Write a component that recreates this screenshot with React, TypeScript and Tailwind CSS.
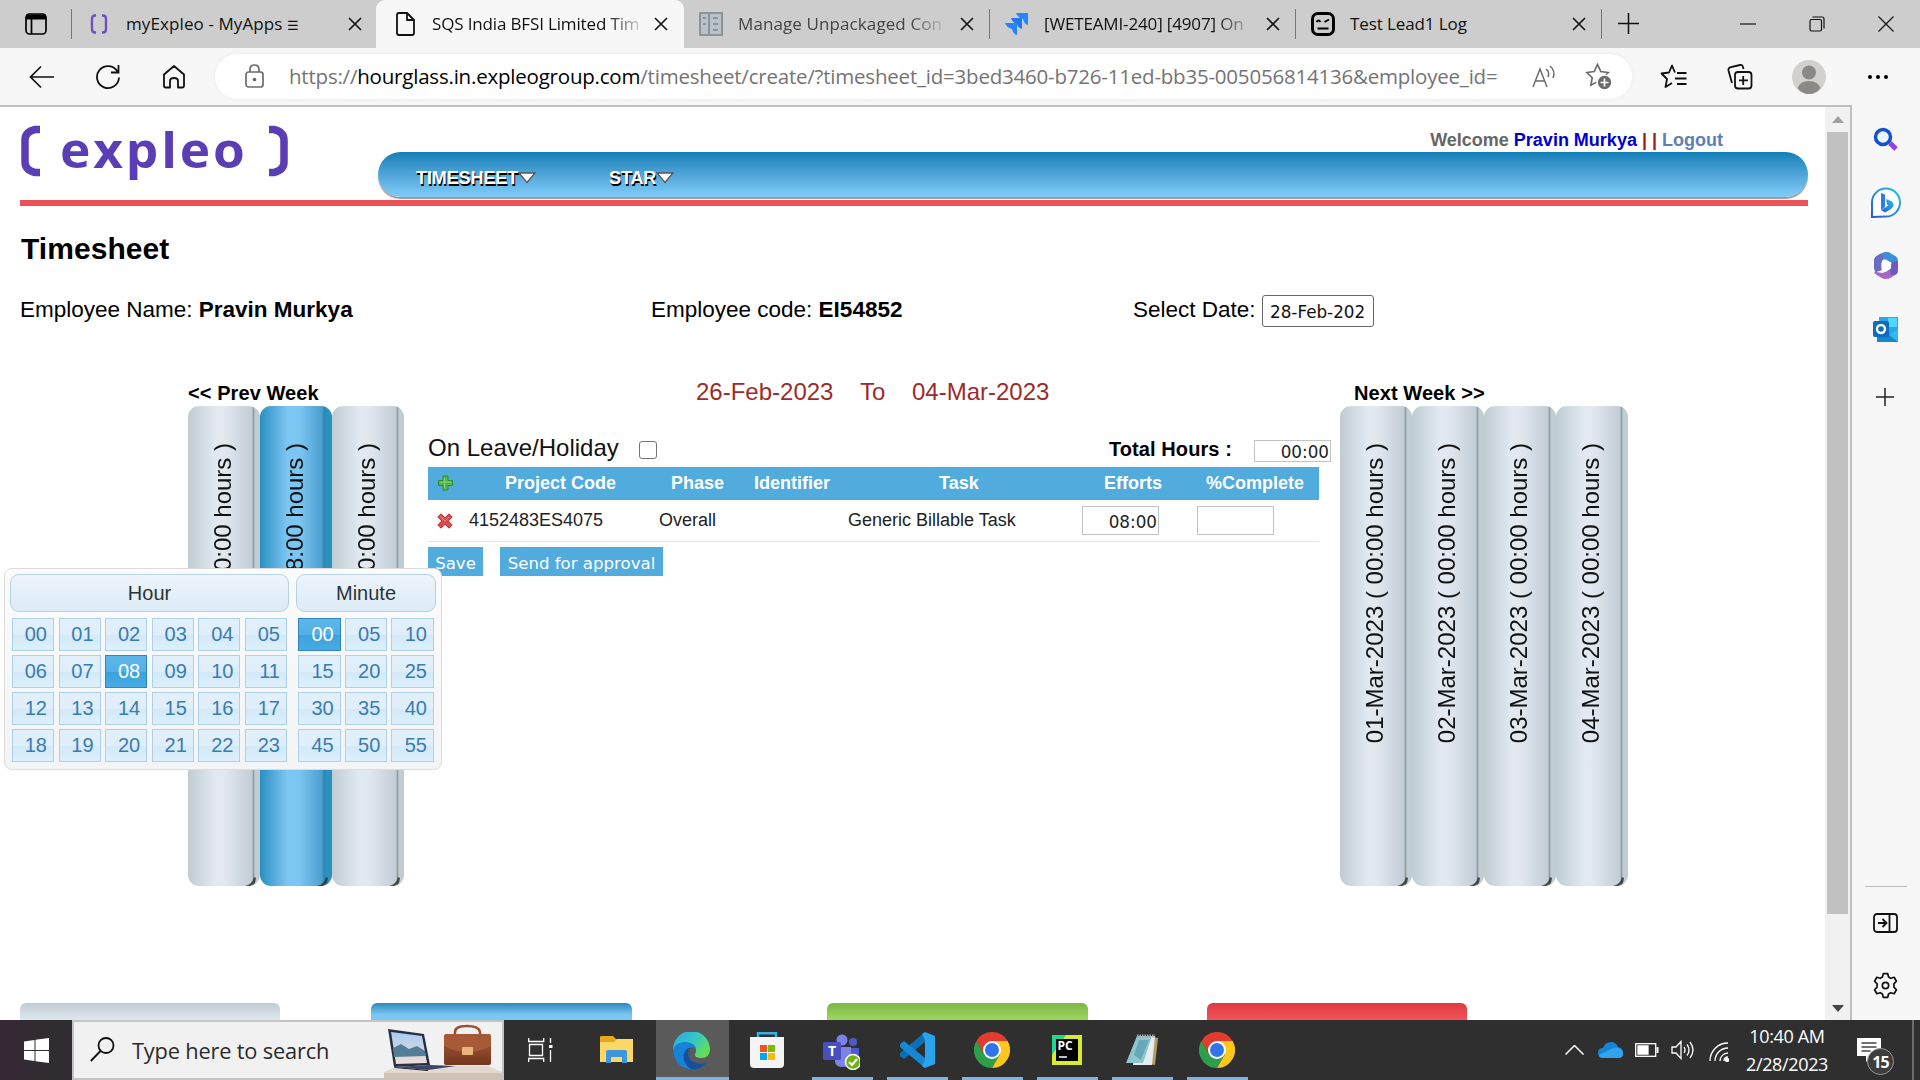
import React from "react";

const seg = "font-['Open_Sans',sans-serif]";

function Close({ className = "" }: { className?: string }) {
  return (
    <svg className={`h-[14px] w-[14px] shrink-0 ${className}`} viewBox="0 0 14 14" stroke="#111" strokeWidth="1.6" fill="none">
      <path d="M1 1l12 12M13 1L1 13" />
    </svg>
  );
}

function TabBar() {
  return (
    <div className={`flex h-12 shrink-0 items-center bg-[#cdcdcd] text-[17px] text-[#111] ${seg}`}>
      <div className="flex w-[71px] justify-center">
        <svg width="22" height="22" viewBox="0 0 22 22" fill="none" stroke="#000" strokeWidth="1.7">
          <rect x="1" y="1" width="20" height="20" rx="3.5" />
          <path d="M1 4h20" strokeWidth="5" />
          <path d="M6.500 6v15" />
        </svg>
      </div>
      <div className="h-[30px] w-px bg-[#777]" />
      <div className="flex h-full w-[304px] items-center pl-[18px]">
        <svg width="18" height="20" viewBox="0 0 18 20" fill="none" stroke="#6d4fc0" strokeWidth="2.400">
          <path d="M6 1.500H5Q2 1.500 2 5v10q0 3.500 3 3.500h1M12 1.500h1q3 0 3 3.500v10q0 3.500-3 3.500h-1" />
        </svg>
        <div className="ml-[18px] w-[222px] whitespace-nowrap tracking-[0.1px]">
          myExpleo - MyApps <span className="text-[13px]">☰</span>
        </div>
        <Close />
      </div>
      <div className="flex h-full w-[308px] items-center rounded-t-[9px] bg-[#f7f7f7] pl-[20px]">
        <svg width="19" height="24" viewBox="0 0 19 24" fill="none" stroke="#111" strokeWidth="1.800" strokeLinejoin="round">
          <path d="M3 1h8l7 7v13q0 2-2 2H3q-2 0-2-2V3q0-2 2-2zM11 1v7h7" />
        </svg>
        <div className="ml-[17px] w-[214px] whitespace-nowrap tracking-[-0.15px] mask-r-from-82%">SQS India BFSI Limited Tim</div>
        <Close className="ml-[8px]" />
      </div>
      <div className="flex h-full w-[305px] items-center pl-[15px]">
        <svg width="24" height="24" viewBox="0 0 24 24" fill="#b9c2c8" stroke="#8b9499" strokeWidth="2">
          <rect x="1" y="1" width="22" height="22" />
          <path d="M10 1v22M4 6h3M4 12h3M14 6h5M14 12h5M14 18h5" />
        </svg>
        <div className="ml-[15px] w-[210px] whitespace-nowrap tracking-[0.1px] text-[#444] mask-r-from-82%">Manage Unpackaged Con</div>
        <Close className="ml-[12px]" />
      </div>
      <div className="h-[30px] w-px bg-[#777]" />
      <div className="flex h-full w-[305px] items-center pl-[15px]">
        <svg width="24" height="24" viewBox="0 0 24 24">
          <path d="M11 1h12v12q-4-1-5-6-5-1-7-6z" fill="#2684ff" />
          <path d="M6 6h11v11q-4-1-5-5-4-1-6-6z" fill="#1f78f0" />
          <path d="M0 11h12v12q-4-1-5-6-5-1-7-6z" fill="#2684ff" />
        </svg>
        <div className="ml-[15px] w-[210px] whitespace-nowrap tracking-[-0.15px] mask-r-from-82%">[WETEAMI-240] [4907] On</div>
        <Close className="ml-[12px]" />
      </div>
      <div className="h-[30px] w-px bg-[#777]" />
      <div className="flex h-full w-[305px] items-center pl-[15px]">
        <svg width="24" height="24" viewBox="0 0 24 24" fill="none" stroke="#000" strokeWidth="2">
          <rect x="1.500" y="1.500" width="21" height="21" rx="5.500" strokeWidth="3" />
          <path d="M5.500 10q2-3 4 0M13.500 10l4.500-2.500M6.500 16.500h11" />
        </svg>
        <div className="ml-[15px] w-[222px] whitespace-nowrap tracking-[-0.1px]">Test Lead1 Log</div>
        <Close />
      </div>
      <div className="h-[30px] w-px bg-[#777]" />
      <svg className="mb-0.5 ml-[16px]" width="21" height="21" viewBox="0 0 21 21" stroke="#111" strokeWidth="1.500"><path d="M10.500 0v21M0 10.500h21" /></svg>
      <svg className="ml-[101px]" width="16" height="16" viewBox="0 0 16 16" stroke="#111" strokeWidth="1.200"><path d="M0 8h16" /></svg>
      <svg className="ml-[53px]" width="16" height="16" viewBox="0 0 16 16" fill="none" stroke="#111" strokeWidth="1.200">
        <rect x="1" y="3.500" width="11.500" height="11.500" rx="1.500" /><path d="M3.500 1H13q2 0 2 2v9.500" />
      </svg>
      <svg className="ml-[53px]" width="16" height="16" viewBox="0 0 16 16" stroke="#111" strokeWidth="1.200"><path d="M.5.500l15 15M15.500.500l-15 15" /></svg>
    </div>
  );
}

const starPath = "M12.500 1.500l3.300 7 7.400 1-5.400 5.200 1.300 7.500-6.600-3.600-6.600 3.600 1.300-7.500L1.800 9.500l7.400-1z";

function Toolbar() {
  return (
    <div className="flex h-[57px] shrink-0 items-center bg-[#f7f7f7] pl-[29px]">
      <svg width="26" height="24" viewBox="0 0 26 24" fill="none" stroke="#111" strokeWidth="1.700"><path d="M25 12H2M12 1.500L1.500 12 12 22.500" /></svg>
      <svg className="ml-[40px]" width="26" height="26" viewBox="0 0 26 26" fill="none" stroke="#111" strokeWidth="1.800"><path d="M22.500 7.500A11 11 0 1 0 24 13.500M23.500 1v7.500H16" /></svg>
      <svg className="ml-[41px]" width="24" height="26" viewBox="0 0 24 26" fill="none" stroke="#111" strokeWidth="1.800" strokeLinejoin="round"><path d="M2 10.500L12 2l10 8.500V22q0 1.500-1.500 1.500H16V17q0-3-4-3t-4 3v6.500H3.500Q2 23.500 2 22z" /></svg>
      <div className="ml-[29px] flex h-[45px] w-[1417px] items-center rounded-full bg-white pl-[30px] shadow-[0_0_5px_#e9e9e9]">
        <svg className="mb-0.5" width="19" height="24" viewBox="0 0 19 24" fill="none" stroke="#6b6b6b" strokeWidth="1.700">
          <rect x="1" y="8" width="17" height="15" rx="2.500" /><path d="M5 8V5.500Q5 1 9.500 1T14 5.500V8" /><circle cx="9.500" cy="15.500" r="1" fill="#6b6b6b" />
        </svg>
        <div className={`ml-[25px] w-[1219px] whitespace-nowrap text-[20.500px] tracking-[-0.210px] text-[#747474] ${seg}`}>
          https://<span className="text-black">hourglass.in.expleogroup.com</span>/timesheet/create/?timesheet_id=3bed3460-b726-11ed-bb35-005056814136&amp;employee_id=
        </div>
        <svg className="ml-[24px]" width="25" height="24" viewBox="0 0 25 24" fill="none" stroke="#6b6b6b" strokeWidth="1.500"><path d="M1 22L8 4l7 18M3.500 16h9M14 4q4 3 2 8M18 1q6 5 3 12" /></svg>
        <svg className="ml-[28px]" width="27" height="27" viewBox="0 0 27 27" fill="none" stroke="#6b6b6b" strokeWidth="1.700">
          <path d={starPath} /><circle cx="19.500" cy="19.500" r="7.500" fill="#6b6b6b" stroke="#fff" /><path d="M15.500 19.500h8M19.500 15.500v8" stroke="#fff" />
        </svg>
      </div>
      <svg className="ml-[28px]" width="27" height="25" viewBox="0 0 27 25" fill="none" stroke="#111" strokeWidth="1.800" strokeLinejoin="round"><path d="M15 8.500L12 1.500 9 8.500l-7.500 1L7 15l-1.500 8 6.500-4M17 9h9.500M15 14.500h11.500M17 20h9.500" /></svg>
      <svg className="ml-[40px]" width="26" height="26" viewBox="0 0 26 26" fill="none" stroke="#111" strokeWidth="1.800"><rect x="8" y="8" width="16.500" height="16.500" rx="3" /><path d="M16.200 12v9M12 16.300h9M5 19L1.500 6.500Q1 4 3 3.300L13 1q2.500-.5 3 2l.5 2" /></svg>
      <svg className="ml-[39px]" width="34" height="34" viewBox="0 0 34 34"><circle cx="17" cy="17" r="17" fill="#d3d1cc" /><circle cx="17" cy="12.500" r="7" fill="#8b8985" /><path d="M5.500 28q3-7 11.500-7t11.500 7Q24 34 17 34T5.500 28z" fill="#8b8985" /></svg>
      <svg className="ml-[41px]" width="22" height="6" viewBox="0 0 22 6"><circle cx="3" cy="3" r="2" /><circle cx="11" cy="3" r="2" /><circle cx="19" cy="3" r="2" /></svg>
    </div>
  );
}

function Caret() {
  return (
    <svg width="18" height="12" viewBox="0 0 18 12"><path d="M1 1h16L9 10.500z" fill="#fff" stroke="#555" strokeWidth="1.300" /></svg>
  );
}

function SiteHeader() {
  return (
    <div className="flex h-[99px] shrink-0 flex-col">
      <div className="flex h-[93px]">
        <div className="flex h-[93px] w-[378px] items-start pl-[20px] pt-[18px]">
          <svg width="20" height="52" viewBox="0 0 20 52" fill="none" stroke="#5b3eb6" strokeWidth="7.500"><path d="M20 4.500h-5Q5 7 5 15v22q0 8 10 10.500h5" /></svg>
          <div className="ml-[20px] w-[209px] origin-left scale-x-[1.07] whitespace-nowrap font-['Open_Sans',sans-serif] text-[48px] leading-[50px] font-bold tracking-[2.700px] text-[#5b3eb6]">expleo</div>
          <svg width="20" height="52" viewBox="0 0 20 52" fill="none" stroke="#5b3eb6" strokeWidth="7.500"><path d="M0 4.500h5Q15 7 15 15v22q0 8-10 10.500H0" /></svg>
        </div>
        <div className="flex w-[1430px] flex-col pt-[22px]">
          <div className="h-[23px] whitespace-nowrap pr-[85px] text-right text-[18px] leading-[22px] font-bold text-[#666]">
            Welcome <span className="text-[#0000cd]">Pravin Murkya</span> <span className="text-[#9b1c1c]">| |</span> <span className="text-[#5f7fb2]">Logout</span>
          </div>
          <div className="flex h-[45px] items-center rounded-full bg-linear-to-b from-[#0d7fb8] to-[#80ccf8] pt-[7px] pl-[38px] text-[18px] font-bold tracking-[-0.100px] text-white shadow-[0_2px_1px_#999] [text-shadow:1px_2px_0_#000]">
            <div className="flex w-[193px] items-center"><span>TIMESHEET</span><Caret /></div>
            <div className="flex items-center"><span>STAR</span><Caret /></div>
          </div>
        </div>
      </div>
      <div className="ml-[20px] h-[6px] w-[1788px] bg-[#ee5259]" />
    </div>
  );
}

function Bar({ text, active = false }: { text: string; active?: boolean }) {
  const tone = active
    ? "bg-[linear-gradient(90deg,#2a8fc0_0%,#7cc6f3_38%,#7cc6f3_54%,#4d9fd0_86%,#2f85ab_89%,#2a94c4_93%,#2a8fc0_100%)]"
    : "bg-[linear-gradient(90deg,#bfccd2_0%,#e1e9f1_38%,#e1e8f0_50%,#c5cfd9_86%,#c2ccd3_89%,#8b999f_91%,#c0cdd3_93%,#bfccd2_100%)]";
  return (
    <div className={`relative flex h-[480px] w-[72px] items-start justify-end overflow-hidden rounded-[11px] ${tone}`}>
      <div className="mt-[37px] mr-[23px] rotate-180 text-[24px] leading-[28px] whitespace-nowrap text-[#111] [writing-mode:vertical-rl]">{text}</div>
      <svg className="absolute right-[3px] bottom-0" width="12" height="9" viewBox="0 0 12 9"><path d="M0 9Q7 8 9 0l2 1-1 5-4 3z" fill="#333" opacity=".85" /></svg>
    </div>
  );
}

function TimeInput({ value, tall = false }: { value: string; tall?: boolean }) {
  return (
    <div className={`flex w-[77px] items-center justify-end border border-[#c3c3c3] bg-white pt-[3px] pr-px font-['DejaVu_Sans',sans-serif] text-[16.800px] leading-none text-[#222] ${tall ? "h-[29px]" : "h-[22px]"}`}>{value}</div>
  );
}

function Entries() {
  return (
    <div className="ml-[24px] w-[912px]">
      <div className="flex h-[32px] items-center text-[24px] text-[#9d2b2b]">
        <span className="ml-[268px] w-[164px]">26-Feb-2023</span><span className="w-[52px]">To</span><span>04-Mar-2023</span>
      </div>
      <div className="mt-[23px] flex h-[36px] items-center">
        <span className="mb-[2px] w-[211px] text-[24px] text-[#111]">On Leave/Holiday</span>
        <div className="mt-[2px] h-[18px] w-[18px] rounded-[3px] border-[1.500px] border-[#767676] bg-white" />
        <span className="ml-[452px] w-[145px] text-[20px] font-bold tracking-[0.080px] text-black">Total Hours :</span>
        <div className="mt-[4px]"><TimeInput value="00:00" /></div>
      </div>
      <div className="flex h-[33px] w-[891px] items-center bg-[#51abdd] pb-px text-[18px] font-bold text-white">
        <svg className="ml-[10px]" width="15" height="16" viewBox="0 0 15 16"><path d="M5 1h5v4.500h4.500v5H10V15H5v-4.500H.5v-5H5z" fill="#4fb74b" stroke="#2e8b34" /><path d="M6.500 2.500v11M2 7h11" stroke="#83d57c" /></svg>
        <span className="ml-[52px] w-[166px]">Project Code</span><span className="w-[83px]">Phase</span><span className="w-[185px]">Identifier</span>
        <span className="w-[165px]">Task</span><span className="w-[102px]">Efforts</span><span>%Complete</span>
      </div>
      <div className="flex h-[42px] w-[891px] items-center border-b border-[#e6e6e6] text-[18px] text-[#222]">
        <svg className="ml-[9px]" width="16" height="16" viewBox="0 0 16 16"><path d="M4 .8l4 4 4-4L15.200 4l-4 4 4 4-3.200 3.200-4-4-4 4L.8 12l4-4-4-4z" fill="#dd4a4c" stroke="#b5292e" /><path d="M3.500 3.500L8 8l4-4" stroke="#f28b8b" fill="none" /></svg>
        <span className="ml-[16px] w-[190px]">4152483ES4075</span><span className="w-[189px]">Overall</span><span className="w-[234px]">Generic Billable Task</span>
        <TimeInput value="08:00" tall />
        <div className="ml-[38px]"><TimeInput value="" tall /></div>
      </div>
      <div className="mt-[5px] flex gap-[17px] font-['DejaVu_Sans',sans-serif] text-[16.600px] text-white">
        <div className="flex h-[29px] w-[55px] items-center justify-center bg-[#51abdd] pt-[5px]">Save</div>
        <div className="flex h-[29px] w-[163px] items-center justify-center bg-[#51abdd] pt-[5px]">Send for approval</div>
      </div>
    </div>
  );
}

function PickerCell({ label, on }: { label: string; on: boolean }) {
  const look = on
    ? "border-[#2e86c4] bg-[linear-gradient(#5cb6e8_0%,#54b0e6_50%,#3da2dc_52%,#48abe2_100%)] text-white"
    : "border-[#aed0ea] bg-[linear-gradient(#e2f0fa_0%,#deeefb_50%,#d3e9f8_52%,#dcf0fc_100%)] text-[#3a7cb0]";
  return <div className={`flex h-[33px] items-center justify-end border pr-[6px] pb-[2px] text-[20px] leading-none ${look}`}>{label}</div>;
}

function TimePicker() {
  const hours = Array.from({ length: 24 }, (_, i) => String(i).padStart(2, "0"));
  const minutes = Array.from({ length: 12 }, (_, i) => String(i * 5).padStart(2, "0"));
  const head = "flex h-[38px] items-center justify-center rounded-[9px] border border-[#b3d2ea] bg-linear-to-b from-[#edf4fb] to-[#dcebf7] text-[20px] text-[#2b3338]";
  return (
    <div className="absolute top-[461px] left-[4px] flex h-[202px] w-[438px] gap-[7px] rounded-[8px] border border-[#dcdcdc] bg-linear-to-b from-[#fbfbfb] to-[#f2f4f5] pt-[5px] pl-[5px]">
      <div className="w-[279px]">
        <div className={head}>Hour</div>
        <div className="mt-[6px] grid w-[277px] grid-cols-6 gap-x-[4.600px] gap-y-1 pl-[2px]">
          {hours.map((h) => <PickerCell key={h} label={h} on={h === "08"} />)}
        </div>
      </div>
      <div className="w-[140px]">
        <div className={head}>Minute</div>
        <div className="mt-[6px] grid w-[138px] grid-cols-3 gap-x-[4px] gap-y-1 pl-[2px]">
          {minutes.map((m) => <PickerCell key={m} label={m} on={m === "00"} />)}
        </div>
      </div>
    </div>
  );
}

function Page() {
  return (
    <div className="relative flex h-[913px] w-[1825px] flex-col overflow-hidden bg-white">
      <SiteHeader />
      <div className="flex h-[88px] shrink-0 items-center pb-[3px] pl-[21px] text-[30px] font-bold tracking-[0.050px] text-black">Timesheet</div>
      <div className="flex h-[34px] shrink-0 items-center pl-[20px] text-[22.500px] whitespace-nowrap text-black">
        <div className="w-[631px] pb-[3px]">Employee Name: <b>Pravin Murkya</b></div>
        <div className="w-[482px] pb-[3px]">Employee code: <b>EI54852</b></div>
        <div className="w-[129px] pb-[3px]">Select Date:</div>
        <div className="flex h-[32px] w-[112px] items-center overflow-hidden rounded-[3px] border border-[#666] pt-[3px] pl-[7px] font-['DejaVu_Sans',sans-serif] text-[16.800px] text-[#111]">28-Feb-202</div>
      </div>
      <div className="mt-[48px] flex shrink-0 pl-[188px]">
        <div>
          <div className="h-[30px] text-[20px] leading-[34px] font-bold tracking-[0.080px] text-black">&lt;&lt; Prev Week</div>
          <div className="flex">
            <Bar text="26-Feb-2023 ( 00:00 hours )" />
            <Bar text="27-Feb-2023 ( 08:00 hours )" active />
            <Bar text="28-Feb-2023 ( 00:00 hours )" />
          </div>
        </div>
        <Entries />
        <div>
          <div className="h-[30px] pl-[14px] text-[20px] leading-[34px] font-bold tracking-[0.080px] text-black">Next Week &gt;&gt;</div>
          <div className="flex">
            {["01", "02", "03", "04"].map((d) => <Bar key={d} text={`${d}-Mar-2023 ( 00:00 hours )`} />)}
          </div>
        </div>
      </div>
      <div className="mt-auto flex h-[17px] shrink-0 pl-[20px]">
        <div className="w-[260px] rounded-t-[6px] bg-linear-to-b from-[#bfccd2] to-[#dee8ef]" />
        <div className="ml-[91px] w-[261px] rounded-t-[6px] bg-linear-to-b from-[#258bbd] to-[#7cc6f3] to-70%" />
        <div className="ml-[195px] w-[261px] rounded-t-[6px] bg-linear-to-b from-[#7eb544] to-[#9fd764]" />
        <div className="ml-[119px] w-[260px] rounded-t-[6px] bg-linear-to-b from-[#de3940] to-[#f2545b]" />
      </div>
      <TimePicker />
    </div>
  );
}

function Sidebar() {
  return (
    <div className="flex w-[68px] flex-col items-center bg-[#f7f7f7] pt-[22px] pr-px">
      <svg width="26" height="26" viewBox="0 0 26 26" fill="none"><path d="M17 16l6 6" stroke="#9440e8" strokeWidth="5" /><circle cx="10" cy="10" r="7.500" stroke="#1653c8" strokeWidth="3.500" fill="#e8f6ff" /></svg>
      <svg className="mt-[34px]" width="32" height="32" viewBox="0 0 32 32" fill="none">
        <defs><linearGradient id="bing" x1="1" y1="0" x2="0" y2="1"><stop stopColor="#23c5dc" /><stop offset="1" stopColor="#2858d8" /></linearGradient></defs>
        <path d="M2 30V16A14 14 0 1 1 16 29.500z" stroke="url(#bing)" strokeWidth="2" fill="#fff" />
        <path d="M11 6l4 1.500V20l-4 3z" fill="#2f7be6" /><path d="M16 12l6 2.500q2 1.500 1.500 4.500Q22 22 15 25.500L11 23l7.500-4.500-1.500-1z" fill="url(#bing)" />
      </svg>
      <svg className="mt-[33px]" width="26" height="27" viewBox="0 0 26 27">
        <path d="M8 1.500q5-3 10 0L11 6 8.500 9.500V18L3 20Q1 18 1 14V9q0-3 2-4.500z" fill="#5a7fd6" />
        <path d="M1 9q0-3 2-4.500l5-3 3 4.500-2.500 3.500V18L3 20Q1 18 1 14z" fill="#6b6bc4" />
        <path d="M10 1q4-2 8 .5l5 3q2 1.500 2 4.500v6l-6-4-6-3.500H8.500L12 4z" fill="#3d8fd9" />
        <path d="M25 14v4q0 3-2 4.500L18 25.500q-5 3-10 0l-5-3q-1.500-1-2-3l8 1.500q6-1 9-6l1-6 6 3z" fill="#a268c8" />
        <path d="M19 10l6-1v9q0 3-2 4.500l-5 .5q-2-6 1-13z" fill="#5553b9" opacity=".65" />
        <path d="M13 8.500l5 2.500v5.500l-5 2.700-4.500-2.700V11z" fill="#fff" />
      </svg>
      <svg className="mt-[38px]" width="25" height="25" viewBox="0 0 25 25"><path d="M6 0h19v22H6z" fill="#28a8ea" /><path d="M15 1h9v9h-9z" fill="#50d9ff" /><path d="M4 13l10 6 11-6v12H4z" fill="#1686ca" /><path d="M25 12v13l-9-7z" fill="#35b8f1" /><rect y="4" width="16" height="16" rx="2" fill="#0f6cbd" /><circle cx="8" cy="12" r="4" fill="none" stroke="#fff" strokeWidth="2.400" /></svg>
      <svg className="mt-[46px] mr-[2px]" width="18" height="18" viewBox="0 0 18 18" stroke="#222" strokeWidth="1.500"><path d="M9 0v18M0 9h18" /></svg>
      <div className="mt-[480px] h-px w-[42px] bg-[#bdbdbd]" />
      <svg className="mt-[26px]" width="25" height="20" viewBox="0 0 25 20" fill="none" stroke="#111" strokeWidth="1.800"><rect x="1" y="1" width="23" height="18" rx="3" /><path d="M16.500 1v18M5 10h8M9.500 6l4 4-4 4" /></svg>
      <svg className="mt-[39px]" width="27" height="27" viewBox="0 0 24 24" fill="none" stroke="#111" strokeWidth="1.500" strokeLinejoin="round"><path d="M10 1.500h4l.7 3 2 1.100 3-.9 2 3.500L19.500 10.500v3l2.200 2.300-2 3.500-3-.9-2 1.100-.7 3h-4l-.7-3-2-1.100-3 .9-2-3.500 2.200-2.300v-3L2.300 8.200l2-3.500 3 .9 2-1.100z" /><circle cx="12" cy="12" r="2.800" /></svg>
    </div>
  );
}

function Chrome() {
  return (
    <svg width="36" height="36" viewBox="0 0 48 48">
      <path d="M3.200 12A24 24 0 0 1 44.800 12H24L13.600 30z" fill="#e33b2e" />
      <path d="M3.200 12A24 24 0 0 0 24 48l10.400-18H13.600z" fill="#2c9f48" />
      <path d="M44.800 12A24 24 0 0 1 24 48l10.400-18L24 12z" fill="#fdc71b" />
      <circle cx="24" cy="24" r="12" fill="#fff" /><circle cx="24" cy="24" r="9.300" fill="#2f74e8" />
    </svg>
  );
}

function Slot({ children, on = false, line = true }: { children: React.ReactNode; on?: boolean; line?: boolean }) {
  return (
    <div className={`relative flex h-full w-[75px] justify-center pr-[4px] ${on ? "bg-linear-to-r from-[#5a5a5a] from-[73px] to-transparent to-[73px]" : ""}`}>
      <div className="flex h-full items-center">{children}</div>
      {line && <div className={`absolute bottom-0 h-[3px] bg-[#7db3de] ${on ? "left-0 w-[73px]" : "left-[6px] w-[61px]"}`} />}
    </div>
  );
}

function Taskbar() {
  return (
    <div className={`flex h-[60px] shrink-0 items-center bg-[#2f2f2f] ${seg}`}>
      <div className="flex h-full w-[72px] items-center justify-center bg-linear-to-r from-[#352936] to-[#2f2d2f]">
        <svg width="25" height="25" viewBox="0 0 25 25" fill="#fff"><path d="M0 3.500L10.500 2v10H0zM11.500 1.800L25 0v12H11.500zM0 13h10.500v10L0 21.500zM11.500 13H25v12l-13.500-1.800z" /></svg>
      </div>
      <div className="flex h-full w-[432px] items-center border-2 border-[#c4c4c4] bg-[#f1f1f1] pl-[16px]">
        <svg className="mb-0.5" width="25" height="25" viewBox="0 0 25 25" fill="none" stroke="#111" strokeWidth="1.800"><circle cx="16" cy="8.500" r="7.500" /><path d="M10.500 14L.8 24" /></svg>
        <div className="mt-[3px] ml-[17px] w-[252px] text-[21.800px] tracking-[-0.180px] whitespace-nowrap text-[#2b2b2b]">Type here to search</div>
        <svg className="shrink-0" width="118" height="58" viewBox="0 0 118 58">
          <defs><linearGradient id="bag" x2="0" y2="1"><stop stopColor="#a75a37" /><stop offset="1" stopColor="#74371f" /></linearGradient><linearGradient id="scr" x2="0" y2="1"><stop stopColor="#a5cdf2" /><stop offset="1" stopColor="#f1dcd5" /></linearGradient></defs>
          <path d="M0 51l14-6h90l14 6v7H0z" fill="#e2d9d0" /><path d="M0 52h118v6H0z" fill="#cfc1b3" />
          <path d="M4 8l36 5 6 31-36 2z" fill="#262f45" /><path d="M7 11l31 4 5 27-31 1z" fill="url(#scr)" /><path d="M9 27l8-4 8 5 8-3 8 5 1 5-32 1z" fill="#527d96" />
          <path d="M10 46l36-2 26 1-28 4z" fill="#3b4565" /><path d="M10 46l34 3v1l-33-3z" fill="#1b2238" />
          <path d="M71 15V11q0-6 12-6t13 6v4" fill="none" stroke="#9a5130" strokeWidth="2.500" /><rect x="60" y="13" width="47" height="31" rx="2" fill="url(#bag)" /><path d="M60 16h47v9q-12 6-23.500 6T60 25z" fill="#a65a38" /><rect x="78" y="26" width="11" height="8" rx="1" fill="#e6b57c" />
        </svg>
      </div>
      <svg className="ml-[24px]" width="25" height="24" viewBox="0 0 25 24" fill="none" stroke="#fff" strokeWidth="1.300"><path d="M.7 0v3.500h15V0M.7 24v-3.500h15V24M1.500 6.500h13v11h-13zM22.500 0v5M22.500 12v12" /><path d="M21 7h3.500v3H21z" fill="#fff" stroke="none" /></svg>
      <div className="w-[28px]" />
      <Slot line={false}>
        <svg width="33" height="28" viewBox="0 0 33 28"><path d="M0 1q0-1 1-1h12l3 3h16q1 0 1 1v22H0z" fill="#e8a71c" /><path d="M0 6h14l3-3h16v23H0z" fill="#ffd766" /><path d="M6 27V16q0-2 2-2h17q2 0 2 2v11h-5v-6H11v6z" fill="#3d96dc" /></svg>
      </Slot>
      <Slot on>
        <svg width="37" height="37" viewBox="0 0 37 37">
          <defs><linearGradient id="eg" x1="0" y1="0" x2="1" y2=".6"><stop stopColor="#2aa9e8" /><stop offset=".55" stopColor="#35c5c5" /><stop offset="1" stopColor="#63df55" /></linearGradient></defs>
          <path d="M0 18A18.500 18.500 0 0 1 37 17q0 9-9 9-7 0-6-4 1-1 1-4 0-7-10-7Q4 11 0 18z" fill="url(#eg)" />
          <path d="M0 18q3-8 12-8 9 0 11 7-3-3-7-1-5 3-3 9 3 9 14 8 4-.5 7-3-5 7-15 7Q2 37 0 18z" fill="#1682d8" />
          <path d="M15 16q-6 5-4 12 2 7 8 9 9 1 15-7-5 3-11 1-8-3-8-10 0-3 2-5z" fill="#1450a0" />
        </svg>
      </Slot>
      <Slot line={false}>
        <svg width="36" height="36" viewBox="0 0 36 36"><path d="M9 9V1.200h18V9" fill="none" stroke="#3bb0e8" strokeWidth="2.400" /><path d="M1 5h34v27q0 4-4 4H5q-4 0-4-4z" fill="#f4f4f4" /><path d="M11 13h7v7h-7z" fill="#f25022" /><path d="M19 13h7v7h-7z" fill="#7fba00" /><path d="M11 21h7v7h-7z" fill="#00a4ef" /><path d="M19 21h7v7h-7z" fill="#ffb900" /></svg>
      </Slot>
      <Slot>
        <svg className="mt-[3px]" width="37" height="36" viewBox="0 0 37 36"><circle cx="19" cy="6" r="5.500" fill="#7b83eb" /><circle cx="30" cy="8" r="4" fill="#5059c9" /><path d="M26 14h10v10q0 6-6 6h-4z" fill="#5059c9" /><path d="M12 13h16v14q0 6-8 6t-8-6z" fill="#7b83eb" /><rect y="8" width="18" height="18" rx="1.500" fill="#4850c0" /><text x="9" y="22" textAnchor="middle" fontSize="14" fontWeight="bold" fill="#fff">T</text><circle cx="30" cy="28" r="7.500" fill="#6fb215" stroke="#fff" strokeWidth="1.500" /><path d="M26 28l3 3 5-6" fill="none" stroke="#fff" strokeWidth="2" /></svg>
      </Slot>
      <Slot>
        <svg width="36" height="36" viewBox="0 0 36 36"><path d="M26 0v10L5 27l-4-3v-3z" fill="#0a6fb8" /><path d="M26 36V26L5 9l-4 3v3z" fill="#1688d3" /><path d="M26 0l10 4v28l-10 4-3-2 3-6V8l-3-6z" fill="#2ba4ee" /></svg>
      </Slot>
      <Slot><Chrome /></Slot>
      <Slot>
        <svg width="30" height="30" viewBox="0 0 30 30"><rect width="30" height="30" fill="#d9ea35" /><path d="M0 0h14L0 20z" fill="#21d789" /><rect x="4" y="4" width="22" height="22" fill="#000" /><text x="5.500" y="15" fontSize="12" fontWeight="bold" fill="#fff">PC</text><path d="M7 22h8" stroke="#fff" strokeWidth="1.500" /></svg>
      </Slot>
      <Slot>
        <svg width="34" height="32" viewBox="0 0 34 32"><path d="M28 3l5 1-3 27-6-1z" fill="#b79b62" /><path d="M12 2h18l-3 29H8z" fill="#e4eef0" /><path d="M12 2h15L18 29H1z" fill="#8fc4d0" /><path d="M14 6l10 0-8 20-7-5z" fill="#549eb2" opacity=".7" /><path d="M12 2h18" stroke="#aaa" strokeWidth="3" strokeDasharray="1.500 1" /></svg>
      </Slot>
      <Slot><Chrome /></Slot>
      <svg className="ml-[309px]" width="19" height="10" viewBox="0 0 19 10" fill="none" stroke="#fff" strokeWidth="1.500"><path d="M.5 9.500l9-9 9 9" /></svg>
      <svg className="ml-[14px]" width="25" height="16" viewBox="0 0 25 16"><path d="M5 16q-5 0-5-5t5-5q2-6 8-6 5 0 7 5 5 1 5 6t-5 5z" fill="#1684d8" /><path d="M5 16q-4 0-4-3l14-7q3-1 5 0 5 1 5 5.500T20 16z" fill="#32a4ee" /></svg>
      <svg className="ml-[12px]" width="24" height="14" viewBox="0 0 24 14" fill="none" stroke="#fff" strokeWidth="1.300"><rect x=".7" y=".7" width="20" height="12.600" /><path d="M3 3h10v8H3z" fill="#fff" /><path d="M22.500 4v6" strokeWidth="2" /></svg>
      <svg className="ml-[12px]" width="24" height="20" viewBox="0 0 24 20" fill="none" stroke="#fff" strokeWidth="1.300"><path d="M1 7h4l5-5.500v17L5 13H1zM13 7q2 3 0 6M16 4.500q4 5.500 0 11M19 2q6 8 0 16" /></svg>
      <svg className="mt-[3px] ml-[14px]" width="20" height="20" viewBox="0 0 20 20" fill="none" stroke="#fff" strokeWidth="1.300"><path d="M1 19A18 18 0 0 1 19 1M6 19A13 13 0 0 1 19 6M11 19a8 8 0 0 1 8-8" /><path d="M15 19q0-4 4-4" /><circle cx="18" cy="18" r="1.500" fill="#fff" /></svg>
      <div className="ml-[12px] w-[92px] text-center text-[18px] leading-[28px] tracking-[-0.350px] whitespace-nowrap text-white"><div>10:40 AM</div><div>2/28/2023</div></div>
      <div className="relative ml-[24px] h-[44px] w-[38px]">
        <svg width="24" height="26" viewBox="0 0 24 26" className="mt-[10px]"><path d="M0 0h24v18H15l-6 6v-6H0z" fill="#fff" /><path d="M4.500 5h15M4.500 9h15M4.500 13h9" stroke="#444" strokeWidth="1.300" /></svg>
        <div className="absolute top-[20px] left-[10px] flex h-[27px] w-[27px] items-center justify-center rounded-full border border-[#999] bg-[#3d3d3d] text-[16px] font-bold tracking-[-0.800px] text-white">15</div>
      </div>
      <div className="ml-auto h-full w-[8px] border-l-2 border-[#6a6a6a]" />
    </div>
  );
}

export default function App() {
  return (
    <div className="flex h-[1080px] w-[1920px] flex-col overflow-hidden bg-white font-['Liberation_Sans',Arial,sans-serif]">
      <TabBar />
      <Toolbar />
      <div className="flex h-[915px] shrink-0">
        <div className="w-[1852px] border-t-2 border-r-2 border-[#bfbfbf]">
          <div className="flex">
            <Page />
            <div className="flex h-[913px] w-[25px] flex-col items-center bg-[#f1f1f1]">
              <div className="flex h-[25px] items-center"><svg width="12" height="7" viewBox="0 0 12 7"><path d="M6 0l6 7H0z" fill="#a0a0a0" /></svg></div>
              <div className="h-[782px] w-[21px] bg-[#c1c1c1]" />
              <svg className="mt-[91px]" width="12" height="7" viewBox="0 0 12 7"><path d="M0 0h12L6 7z" fill="#444" /></svg>
            </div>
          </div>
        </div>
        <Sidebar />
      </div>
      <Taskbar />
    </div>
  );
}
